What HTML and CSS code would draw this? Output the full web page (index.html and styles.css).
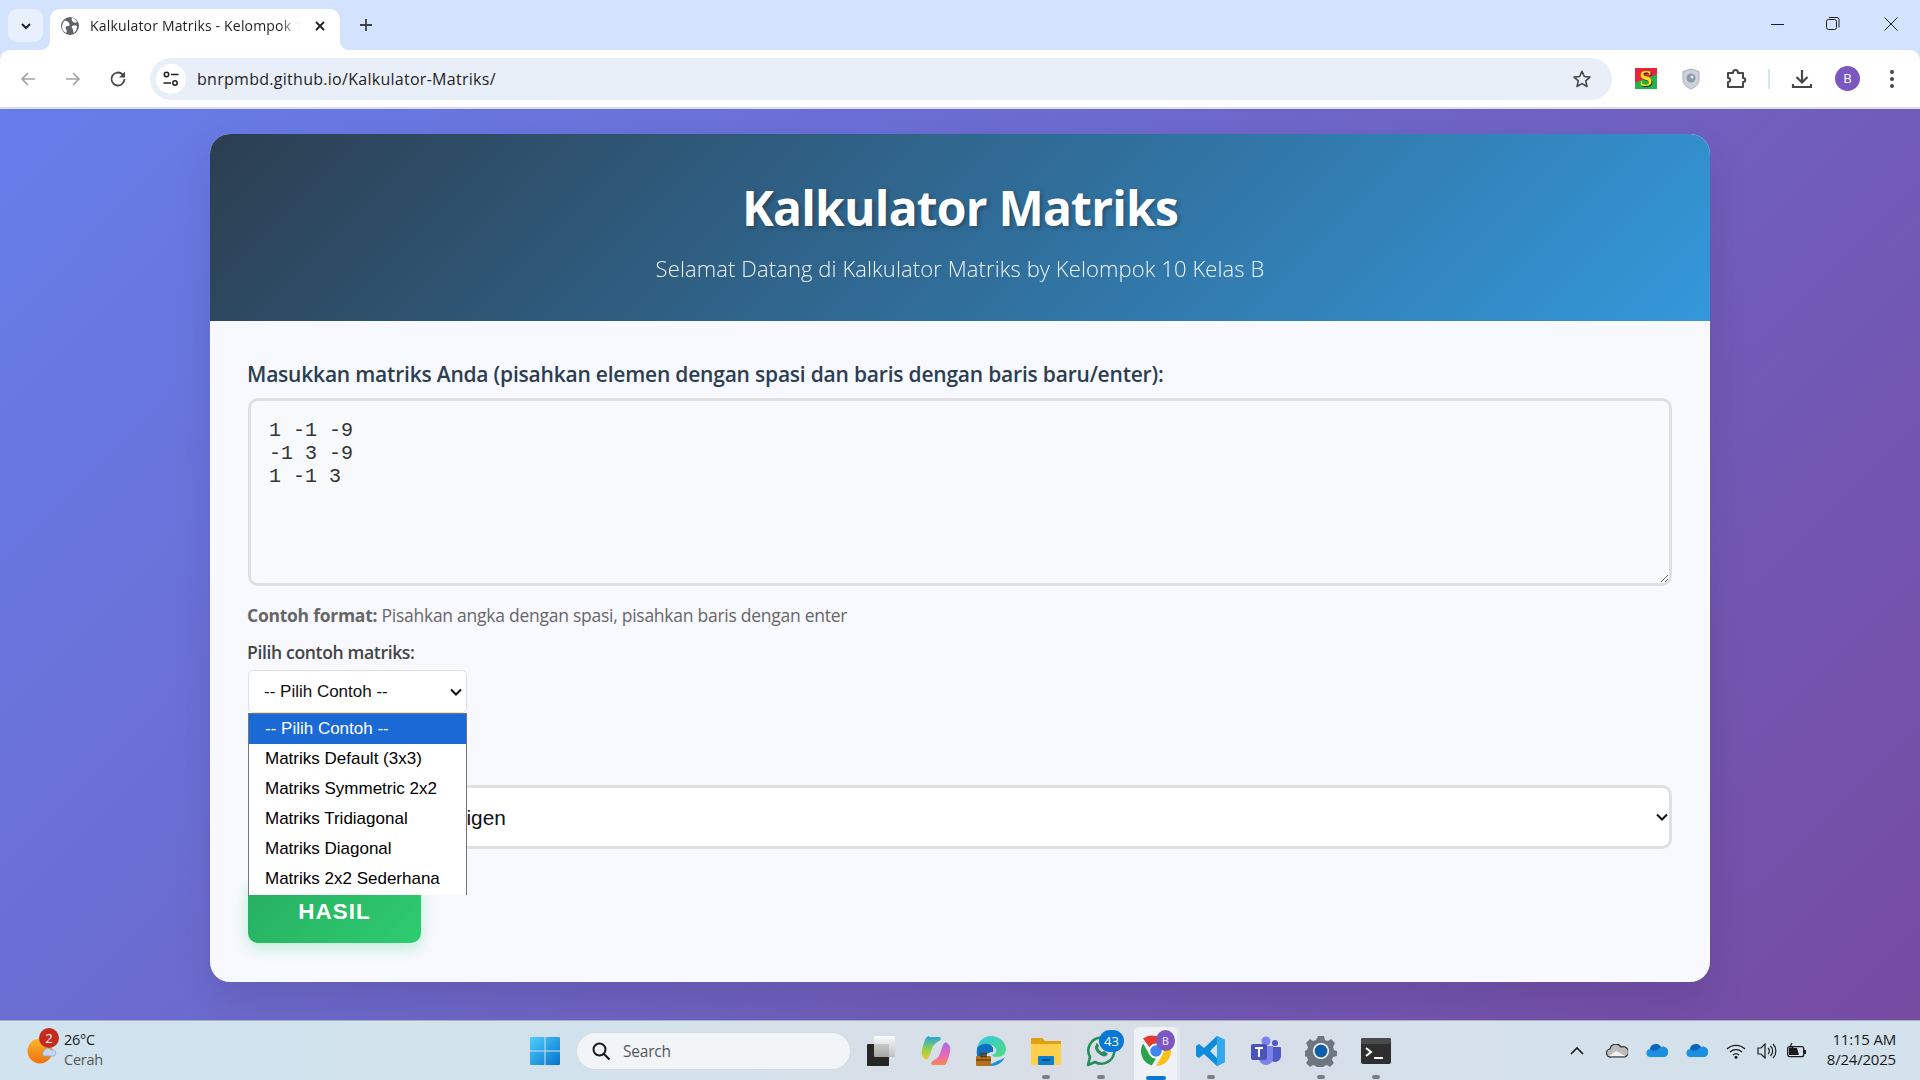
FILE: index.html
```html
<!DOCTYPE html>
<html lang="id">
<head>
<meta charset="utf-8">
<title>Kalkulator Matriks</title>
<link rel="stylesheet" href="styles.css">
</head>
<body>
<header class="browser">
  <div class="tabstrip">
    <button class="tabsearch"><svg width="14" height="14" viewBox="0 0 14 14"><path d="M3 5l4 4 4-4" fill="none" stroke="#1f1f1f" stroke-width="2"/></svg></button>
    <div class="tab">
      <svg class="favicon" width="18" height="18" viewBox="0 0 18 18"><circle cx="9" cy="9" r="9" fill="#5f6368"/><path d="M3 4c3-1 4 1 5 2s1 3-1 3-3 1-2 3 1 3 0 4c-2-1-4-3-4-6 0-2 1-4 2-6zM11 1c2 0 4 2 5 4-1 1-3 1-4 0s-2-3-1-4zM11 9c2-1 4-1 5 0 0 3-1 5-3 7-1-1-1-2-1-3s-2-3-1-4z" fill="#fff"/></svg>
      <span class="tabtitle">Kalkulator Matriks - Kelompok 10 Kelas B</span>
      <svg class="tabclose" width="12" height="12" viewBox="0 0 12 12"><path d="M2 2l8 8M10 2l-8 8" stroke="#1f1f1f" stroke-width="1.8"/></svg>
    </div>
    <svg class="newtab" width="14" height="14" viewBox="0 0 14 14"><path d="M7 1v12M1 7h12" stroke="#3c4043" stroke-width="1.8"/></svg>
    <div class="winctrls">
      <svg width="14" height="14" viewBox="0 0 14 14"><path d="M0 7.5h13" stroke="#1f1f1f"/></svg>
      <svg width="14" height="14" viewBox="0 0 14 14"><rect x=".5" y="2.5" width="10" height="10" rx="2" fill="none" stroke="#1f1f1f"/><path d="M3 .5h8a2 2 0 0 1 2 2v8" fill="none" stroke="#1f1f1f"/></svg>
      <svg class="winclose" width="14" height="14" viewBox="0 0 14 14"><path d="M.5.5l13 13M13.500.5l-13 13" stroke="#1f1f1f"/></svg>
    </div>
  </div>
  <div class="toolbar">
    <svg class="navbtn" width="18" height="18" viewBox="0 0 18 18"><path d="M16 9H3M9 3L3 9l6 6" fill="none" stroke="#a0a3a7" stroke-width="1.7"/></svg>
    <svg class="navbtn" width="18" height="18" viewBox="0 0 18 18"><path d="M2 9h13M9 3l6 6-6 6" fill="none" stroke="#a0a3a7" stroke-width="1.7"/></svg>
    <svg class="navbtn" width="18" height="18" viewBox="0 0 18 18"><path d="M15.500 9a6.500 6.500 0 1 1-1.900-4.600L15.500 6.500" fill="none" stroke="#474747" stroke-width="1.800"/><path d="M16 1.500v6h-6z" fill="#474747"/></svg>
    <div class="omnibox">
      <span class="tune"><svg width="18" height="18" viewBox="0 0 18 18"><circle cx="4.500" cy="4.500" r="2.200" fill="none" stroke="#1f1f1f" stroke-width="1.500"/><path d="M9 4.500h7.500M1.500 13H9" stroke="#1f1f1f" stroke-width="1.500"/><circle cx="13" cy="13" r="2.200" fill="none" stroke="#1f1f1f" stroke-width="1.500"/></svg></span>
      <span class="url">bnrpmbd.github.io/Kalkulator-Matriks/</span>
      <svg class="star" width="20" height="20" viewBox="0 0 20 20"><path d="M10 2.300l2.300 5.200 5.700.6-4.300 3.800 1.300 5.600L10 14.600l-5 2.900 1.300-5.600L2 8.100l5.700-.6z" fill="none" stroke="#474747" stroke-width="1.600" stroke-linejoin="round"/></svg>
    </div>
    <div class="extensions">
      <span class="ext-s">S</span>
      <svg class="ext-shield" width="18" height="22" viewBox="0 0 18 22"><path d="M9 1l8 2.500v8c0 4.500-4 8-8 9.500-4-1.500-8-5-8-9.500v-8z" fill="#cbd2dc" stroke="#a3adbb"/><circle cx="9" cy="10" r="4.500" fill="#8f99a8"/><circle cx="10" cy="9" r="1.500" fill="#e4e8ee"/></svg>
      <svg class="ext-puzzle" width="22" height="22" viewBox="0 0 22 22"><path d="M2 5h5c0-4 5-4 5 0h5v5c3 0 3 4 0 4v5H2v-5c3 0 3-4 0-4z" fill="none" stroke="#474747" stroke-width="2" stroke-linejoin="round"/></svg>
      <span class="divider"></span>
      <svg class="ext-dl" width="22" height="22" viewBox="0 0 22 22"><path d="M11 2v12M5.500 9l5.500 5.500L16.500 9M2 16v3h18v-3" fill="none" stroke="#474747" stroke-width="2.200"/></svg>
      <span class="avatar">B</span>
      <svg class="ext-menu" width="6" height="20" viewBox="0 0 6 20"><circle cx="3" cy="3" r="2" fill="#474747"/><circle cx="3" cy="10" r="2" fill="#474747"/><circle cx="3" cy="17" r="2" fill="#474747"/></svg>
    </div>
  </div>
</header>

<main class="viewport">
  <section class="card">
    <div class="hero">
      <h1 class="hero-title">Kalkulator Matriks</h1>
      <p class="hero-sub">Selamat Datang di Kalkulator Matriks by Kelompok 10 Kelas B</p>
    </div>
    <div class="content">
      <label class="main-label">Masukkan matriks Anda (pisahkan elemen dengan spasi dan baris dengan baris baru/enter):</label>
      <textarea class="matrix-input" spellcheck="false">1 -1 -9
-1 3 -9
1 -1 3</textarea>
      <p class="hint"><strong>Contoh format:</strong> Pisahkan angka dengan spasi, pisahkan baris dengan enter</p>
      <label class="sub-label">Pilih contoh matriks:</label>
      <div class="example-wrap">
        <select class="example-select"><option>-- Pilih Contoh --</option></select>
        <ul class="popup">
          <li class="popup-item selected">-- Pilih Contoh --</li>
          <li class="popup-item">Matriks Default (3x3)</li>
          <li class="popup-item">Matriks Symmetric 2x2</li>
          <li class="popup-item">Matriks Tridiagonal</li>
          <li class="popup-item">Matriks Diagonal</li>
          <li class="popup-item">Matriks 2x2 Sederhana</li>
        </ul>
      </div>
      <label class="op-label">Pilih operasi:</label>
      <select class="op-select"><option>Nilai Eigen &amp; Vektor Eigen</option></select>
      <button class="submit">HASIL</button>
    </div>
  </section>
</main>

<footer class="taskbar">
  <div class="weather">
    <span class="weather-icon">
      <svg width="32" height="32" viewBox="0 0 32 32"><defs><linearGradient id="sun" x1="0" y1="0" x2="0" y2="1"><stop offset="0" stop-color="#f9b72c"/><stop offset="1" stop-color="#f0700f"/></linearGradient></defs><circle cx="15" cy="16" r="12.500" fill="url(#sun)"/><path d="M19 21a3 3 0 0 1 0-5 4 4 0 0 1 7-1 3 3 0 0 1 3 6z" fill="#c5d7f0" stroke="#8ea9d8" stroke-width=".8"/></svg>
      <span class="weather-badge">2</span>
    </span>
    <span class="weather-text"><span class="temp">26°C</span><span class="cond">Cerah</span></span>
  </div>
  <svg class="winlogo" width="30" height="30" viewBox="0 0 30 30"><defs><linearGradient id="win" x1="0" y1="0" x2="1" y2="1"><stop offset="0" stop-color="#52cdfa"/><stop offset="1" stop-color="#0373cf"/></linearGradient></defs><path d="M1 1h13.500v13.500H0V2a1 1 0 0 1 1-1zM15.500 1H29a1 1 0 0 1 1 1v12.500H15.500zM0 15.500h14.500V29H1a1 1 0 0 1-1-1zM15.500 15.500H30V28a1 1 0 0 1-1 1H15.500z" fill="url(#win)"/></svg>
  <div class="searchbox">
    <svg width="20" height="20" viewBox="0 0 20 20"><circle cx="8.500" cy="8.500" r="6" fill="none" stroke="#1a1a1a" stroke-width="2"/><path d="M13 13l5.500 5.500" stroke="#1a1a1a" stroke-width="2.200"/></svg>
    <span>Search</span>
  </div>
  <div class="apps">
    <span class="app">
      <svg width="30" height="32" viewBox="0 0 30 32"><defs><linearGradient id="tv" x1="0" y1="0" x2="0" y2="1"><stop offset="0" stop-color="#fff"/><stop offset="1" stop-color="#bbb"/></linearGradient></defs><rect x="1" y="9" width="22" height="22" rx="1" fill="#262626"/><rect x="8" y="1" width="21" height="21" rx="1" fill="url(#tv)" opacity=".85"/></svg>
    </span>
    <span class="app">
      <svg width="30" height="30" viewBox="0 0 30 30"><defs><linearGradient id="cp1" x1="0" y1="0" x2="0" y2="1"><stop offset="0" stop-color="#1fa2e6"/><stop offset=".55" stop-color="#8fd14f"/><stop offset="1" stop-color="#f5c52d"/></linearGradient><linearGradient id="cp2" x1="0" y1="0" x2="0" y2="1"><stop offset="0" stop-color="#a86be8"/><stop offset=".6" stop-color="#ec6bb6"/><stop offset="1" stop-color="#f58a4a"/></linearGradient></defs><path d="M8 1h10c2 0 2 1 1.500 3L15 7l-3 3-4 11c-1 2-2 3-4 2-3-2-4-5-3-9 1-5 3-10 4-12 1-1 2-2 3-2z" fill="url(#cp1)"/><path d="M22 29H12c-2 0-2-1-1.500-3L15 23l3-3 4-11c1-2 2-3 4-2 3 2 4 5 3 9-1 5-3 10-4 12-1 1-2 1-3 1z" fill="url(#cp2)"/></svg>
    </span>
    <span class="app">
      <svg width="32" height="32" viewBox="0 0 32 32"><defs><linearGradient id="ed" x1="0" y1="0" x2="1" y2="1"><stop offset="0" stop-color="#34c6e8"/><stop offset="1" stop-color="#4fdc7c"/></linearGradient></defs><path d="M2 14C3 6 9 1 16 1c9 0 15 7 15 13 0 5-4 8-9 8-3 0-5-1-5-2 3-1 5-3 4-6-2-4-6-5-10-4-4 1-8 3-9 4z" fill="url(#ed)"/><path d="M2 14c0-2 5-6 11-5 5 1 6 5 5 8-4 0-10 2-11 12C3 26 1 20 2 14z" fill="#0f6fc0"/><path d="M30 22c-3 6-8 9-14 9-2 0-4 0-6-2 3 1 8 0 12-3 3-1 6-2 8-4z" fill="#1b8fd8"/><rect x="1" y="21" width="15" height="10" rx="1" fill="#b5701f"/><rect x="6" y="18.500" width="5" height="3" fill="none" stroke="#5b3a10" stroke-width="1.500"/><path d="M1 25h15" stroke="#6d4210" stroke-width="1.500"/></svg>
    </span>
    <span class="app dot">
      <svg width="30" height="30" viewBox="0 0 30 30"><path d="M0 2h11l3 3h16v6H0z" fill="#e0a012"/><path d="M0 8h30v20a1 1 0 0 1-1 1H1a1 1 0 0 1-1-1z" fill="#fdcf4c"/><rect x="7" y="20" width="16" height="9" rx="1" fill="#0d7fd0"/><path d="M11 24h8" stroke="#06406e" stroke-width="1.500"/></svg>
    </span>
    <span class="app dot">
      <svg width="32" height="32" viewBox="0 0 32 32"><path d="M3 30l2-8a13 13 0 1 1 5 5z" fill="none" stroke="#2a8c5e" stroke-width="2.600" stroke-linejoin="round"/><path d="M11 10c-2 2-1 5 2 8s6 4 8 3c2-1 2-3 1-3l-3-2-2 1c-1 0-3-2-4-4l1-2-2-3c-1 0-1 1-1 2z" fill="#2a8c5e"/></svg>
      <span class="app-badge">43</span>
    </span>
    <span class="app active">
      <svg width="32" height="32" viewBox="0 0 32 32"><path d="M16 1a15 15 0 0 1 13 7.500H16a7.500 7.500 0 0 0-6.500 3.800L3 3.500A15 15 0 0 1 16 1z" fill="#e33b2e"/><path d="M3.100 8.500L9.500 19.800a7.500 7.500 0 0 0 6.500 3.700l-4.300 7A15 15 0 0 1 3.100 8.500z" fill="#2ba14b"/><path d="M29 8.500A15 15 0 0 1 16 31l6.500-11.300a7.500 7.500 0 0 0 0-7.500L16 8.500z" fill="#fbc116"/><circle cx="16" cy="16" r="6.500" fill="#3f86ee" stroke="#fff" stroke-width="1.500"/></svg>
      <span class="chrome-badge">B</span>
    </span>
    <span class="app dot">
      <svg width="30" height="32" viewBox="0 0 30 32"><path d="M21 1l8 4v22l-8 4-13-12-5 4-3-2V11l3-2 5 4zM21 9l-7 7 7 7z" fill="#0f8bdc" fill-rule="evenodd"/><path d="M21 1l8 4v22l-8 4z" fill="#30a9ef"/></svg>
    </span>
    <span class="app">
      <svg width="32" height="30" viewBox="0 0 32 30"><circle cx="16" cy="5" r="4.500" fill="#7b83eb"/><circle cx="25" cy="7" r="3" fill="#5059c9"/><path d="M21 11h9a1 1 0 0 1 1 1v8c0 3-3 6-6 6-2 0-3-1-4-2z" fill="#5059c9"/><path d="M9 10h14v12a7 7 0 0 1-14 0z" fill="#7b83eb"/><rect x="1" y="8" width="16" height="16" rx="2" fill="#4b53bc"/><path d="M5 12h8M9 12v9" stroke="#fff" stroke-width="2"/></svg>
    </span>
    <span class="app dot">
      <svg width="32" height="32" viewBox="0 0 32 32"><path d="M13 1h6l1 4 3 1 3-2 4 4-2 4 1 3 3 1v5l-4 1-1 3 2 3-4 4-3-2-3 1-1 4h-6l-1-4-3-1-3 2-4-4 2-3-1-3-3-1v-5l3-1 1-3-2-4 4-4 3 2 3-1z" fill="#6e7781"/><circle cx="16" cy="16" r="8" fill="#fff"/><circle cx="16" cy="16" r="6.500" fill="#0d5fa8"/></svg>
    </span>
    <span class="app dot">
      <svg width="30" height="26" viewBox="0 0 30 26"><rect width="30" height="26" rx="2" fill="#2f2f2f"/><rect width="30" height="6" rx="2" fill="#4a4a4a"/><path d="M5 10l5 4-5 4" fill="none" stroke="#fff" stroke-width="2"/><path d="M13 20h9" stroke="#fff" stroke-width="2"/></svg>
    </span>
  </div>
  <div class="tray">
    <svg class="tray-chevron" width="16" height="10" viewBox="0 0 16 10"><path d="M2 8l6-6 6 6" fill="none" stroke="#1a1a1a" stroke-width="1.600"/></svg>
    <svg class="tray-cloud" width="22" height="14" viewBox="0 0 22 14"><path d="M5 13a4 4 0 0 1-1-8 6 6 0 0 1 11-2 5 5 0 0 1 4 10z" fill="#bdbdbd" stroke="#2a2a2a" stroke-width="1.200"/><path d="M3 12l7-5 9 5z" fill="#f2f2f2"/></svg>
    <svg class="tray-cloud" width="22" height="14" viewBox="0 0 22 14"><path d="M5 13a4 4 0 0 1-1-8 6 6 0 0 1 11-2 5 5 0 0 1 4 10z" fill="#1b8fe0"/><path d="M4 5a6 6 0 0 1 11-2l-4 3-4 1z" fill="#0b62bc"/></svg>
    <svg class="tray-cloud" width="22" height="14" viewBox="0 0 22 14"><path d="M5 13a4 4 0 0 1-1-8 6 6 0 0 1 11-2 5 5 0 0 1 4 10z" fill="#1b8fe0"/><path d="M4 5a6 6 0 0 1 11-2l-4 3-4 1z" fill="#0b62bc"/></svg>
    <svg class="tray-wifi" width="20" height="16" viewBox="0 0 20 16"><path d="M1 6a13 13 0 0 1 18 0M4 9a9 9 0 0 1 12 0M7 12a4.500 4.500 0 0 1 6 0" fill="none" stroke="#1a1a1a" stroke-width="1.300"/><circle cx="10" cy="14.300" r="1.500" fill="#1a1a1a"/></svg>
    <svg class="tray-vol" width="20" height="16" viewBox="0 0 20 16"><path d="M1 5h3l4-4v14l-4-4H1z" fill="none" stroke="#1a1a1a" stroke-width="1.200"/><path d="M11 5a4 4 0 0 1 0 6M13.500 3a7 7 0 0 1 0 10M16 1a10 10 0 0 1 0 14" fill="none" stroke="#1a1a1a" stroke-width="1.200"/></svg>
    <svg class="tray-batt" width="20" height="16" viewBox="0 0 20 16"><rect x=".7" y="3.700" width="16" height="10" rx="2" fill="none" stroke="#1a1a1a" stroke-width="1.300"/><path d="M18 7v4" stroke="#1a1a1a" stroke-width="2"/><path d="M2 5h8l2 7H2z" fill="#1a1a1a"/><path d="M5 0L3 4h3L4 8" fill="none" stroke="#1a1a1a" stroke-width="1.200"/></svg>
    <div class="clock"><span>11:15 AM</span><span>8/24/2025</span></div>
  </div>
</footer>
</body>
</html>
```
FILE: styles.css
```css
* { box-sizing: border-box; }
html, body { margin: 0; height: 1080px; overflow: hidden; }
body { display: flex; flex-direction: column; width: 1920px; font-family: "Open Sans", "Noto Sans", sans-serif; }

/* browser chrome */
.browser { background: #d3e3fd; flex: none; }
.tabstrip { height: 50px; display: flex; align-items: flex-end; padding-left: 8px; position: relative; }
.tabsearch { width: 35px; height: 33px; margin-bottom: 8px; border: 0; border-radius: 9px; background: #e8f0fe; display: flex; align-items: center; justify-content: center; padding: 0; }
.tab { width: 290px; height: 41px; margin-left: 7px; background: #fff; border-radius: 10px 10px 0 0; display: flex; align-items: center; padding: 0 14px 8px 11px; position: relative; }
.tab::before, .tab::after { content: ""; position: absolute; bottom: 0; width: 10px; height: 10px; }
.tab::before { left: -10px; background: radial-gradient(circle at 0 0, #d3e3fd 10px, #fff 10.5px); }
.tab::after { right: -10px; background: radial-gradient(circle at 100% 0, #d3e3fd 10px, #fff 10.5px); }
.favicon { flex: none; }
.tabtitle { margin-left: 11px; width: 210px; overflow: hidden; white-space: nowrap; font-size: 14px; letter-spacing: .18px; color: #1f1f1f; -webkit-mask-image: linear-gradient(90deg, #000 90%, transparent); mask-image: linear-gradient(90deg, #000 90%, transparent); }
.tabclose { margin-left: auto; flex: none; }
.newtab { margin: 0 0 18px 19px; flex: none; }
.winctrls { margin-left: auto; display: flex; gap: 41px; padding-right: 22px; align-self: flex-start; padding-top: 17px; }
.winclose { margin-left: 3px; }
.toolbar { height: 59px; background: #fff; border-radius: 10px 10px 0 0; border-bottom: 2px solid #dedede; display: flex; align-items: center; padding: 0 18px 0 19px; }
.navbtn { flex: none; margin-right: 27px; }
.navbtn:nth-child(3) { margin-right: 23px; }
.omnibox { width: 1462px; height: 42px; border-radius: 21px; background: #e9eff8; display: flex; align-items: center; padding: 0 20px 0 6px; flex: none; }
.tune { width: 30px; height: 30px; border-radius: 50%; background: #fff; display: flex; align-items: center; justify-content: center; }
.url { margin-left: 11px; font-size: 16px; letter-spacing: .28px; color: #1f1f1f; }
.star { margin-left: auto; }
.extensions { display: flex; align-items: center; flex: none; }
.ext-s { width: 22px; height: 21px; margin-left: 23px; background: linear-gradient(160deg, #e8233f 0 48%, #1fb34a 52%); color: #ffe21a; font: bold 23px/21px "Liberation Serif", serif; text-align: center; text-shadow: 1px 1px 0 #222; }
.ext-shield { margin-left: 25px; }
.ext-puzzle { margin-left: 26px; }
.divider { width: 2px; height: 20px; margin-left: 20px; background: #d3e3fd; }
.ext-dl { margin-left: 21px; }
.avatar { width: 25px; height: 25px; margin-left: 22px; border-radius: 50%; background: #7b57c0; color: #fff; font-size: 13px; line-height: 25px; text-align: center; }
.ext-menu { margin-left: 29px; }

/* page */
.viewport { flex: 1; min-height: 0; padding: 25px 210px 0; background: linear-gradient(135deg, #667eea 0%, #764ba2 100%); }
.card { height: 848px; border-radius: 20px; background: #f8f9ff; box-shadow: 0 20px 40px rgba(0,0,0,.1); overflow: hidden; }
.hero { height: 187px; padding-top: 40px; text-align: center; color: #fff; background: linear-gradient(135deg, #2c3e50 0%, #3498db 100%); }
.hero-title { margin: 0; font-size: 48px; line-height: 68px; font-weight: 700; letter-spacing: -.8px; text-shadow: 2px 2px 4px rgba(0,0,0,.3); }
.hero-sub { margin: 11px 0 0; font-size: 22px; line-height: 30px; font-weight: 300; letter-spacing: .1px; opacity: .92; }
.content { padding: 38px 38px 0; display: flex; flex-direction: column; align-items: flex-start; }
.main-label { font-size: 21px; line-height: 30px; font-weight: 600; color: #2c3e50; letter-spacing: -.21px; margin: 0 0 0 -1px; }
.matrix-input { display: block; width: 1424px; height: 188px; margin-top: 9px; padding: 18px 18px; border: 3px solid #e0e0e0; border-radius: 10px; background: #f8f9fa; font: 20px/23px "Liberation Mono", monospace; color: #333; outline: 0; }
.hint { margin: 17px 0 0 -1px; font-size: 17.500px; line-height: 24px; color: #666; letter-spacing: -.26px; }
.sub-label { margin: 13px 0 0 -1px; font-size: 17.600px; line-height: 24px; font-weight: 600; color: #444; letter-spacing: -.37px; }
.example-wrap { position: relative; margin-top: 6px; }
.example-select { display: block; width: 219px; height: 43px; padding: 0 15px; border: 1px solid #e0e0e0; border-radius: 5px; font: 17px "Liberation Sans", sans-serif; color: #111; appearance: none; background: #fff url("data:image/svg+xml,%3Csvg xmlns='http://www.w3.org/2000/svg' width='12' height='8'%3E%3Cpath d='M1 1.500l5 5 5-5' fill='none' stroke='%23111' stroke-width='2'/%3E%3C/svg%3E") no-repeat right 4px center; }
.popup { position: absolute; top: 43px; left: 0; z-index: 2; width: 219px; height: 182px; margin: 0; padding: 0; overflow: hidden; list-style: none; background: #fff; border: 1px solid #767676; border-bottom: 0; font: 17px/30px "Liberation Sans", sans-serif; color: #000; }
.popup-item { height: 30px; padding-left: 16px; white-space: nowrap; }
.popup-item.selected { background: #1a69d4; color: #fff; }
.op-label { margin-top: 43px; height: 29px; font-size: 18px; font-weight: 600; color: #444; }
.op-select { display: block; width: 1424px; height: 64px; padding: 0 12px; border: 3px solid #e0e0e0; border-radius: 10px; font: 20.800px "Liberation Sans", sans-serif; color: #111; appearance: none; background: #fff url("data:image/svg+xml,%3Csvg xmlns='http://www.w3.org/2000/svg' width='12' height='8'%3E%3Cpath d='M1 1.500l5 5 5-5' fill='none' stroke='%23111' stroke-width='2'/%3E%3C/svg%3E") no-repeat right 1px center; background-origin: padding-box; }
.submit { width: 173px; height: 62px; margin-top: 32px; padding: 0; border: 0; border-radius: 10px; background: linear-gradient(135deg, #27ae60, #2ecc71); color: #fff; font: bold 22.400px "Liberation Sans", sans-serif; letter-spacing: 1.100px; box-shadow: 0 5px 15px rgba(46,204,113,.3); }

/* taskbar */
.taskbar { height: 60px; flex: none; display: flex; align-items: center; border-top: 1px solid #a9b0c4; background: linear-gradient(90deg, #d0e3ef 0%, #d2e2ec 30%, #d9dee6 55%, #d5e0ea 75%, #d3e2ec 100%); position: relative; }
.weather { width: 530px; flex: none; display: flex; align-items: center; padding-left: 25px; }
.weather-icon { position: relative; width: 32px; height: 32px; }
.weather-badge { position: absolute; left: 14px; top: -7px; width: 20px; height: 20px; border-radius: 50%; background: #c42b1c; color: #fff; font-size: 13px; line-height: 20px; text-align: center; }
.weather-text { display: flex; flex-direction: column; margin-left: 7px; font-size: 14.500px; line-height: 20px; letter-spacing: -.25px; margin-top: -1px; }
.temp { color: #1a1a1a; }
.cond { color: #555; }
.winlogo { flex: none; }
.searchbox { width: 275px; height: 38px; margin-left: 16px; flex: none; border-radius: 19px; background: #f1f5f8; border: 1px solid #d5dbe1; display: flex; align-items: center; padding-left: 14px; gap: 12px; font-size: 15.500px; color: #555; letter-spacing: -.2px; }
.apps { display: flex; margin-left: 2px; height: 100%; }
.app { width: 55px; height: 100%; display: flex; align-items: center; justify-content: center; position: relative; }
.dot::after { content: ""; position: absolute; left: 24px; bottom: 1px; width: 8px; height: 4px; border-radius: 2px; background: #7b7f85; }
.app-badge { position: absolute; left: 26px; top: 9px; min-width: 25px; height: 22px; border-radius: 11px; background: #0878d4; color: #fff; font-size: 13px; line-height: 22px; text-align: center; }
.active::before { content: ""; position: absolute; left: 6px; top: 6px; width: 43px; height: 53px; border-radius: 5px 5px 0 0; background: #eef2f7; box-shadow: 3px 0 0 #e2e8ef; }
.active svg { position: relative; }
.active::after { content: ""; position: absolute; left: 18px; bottom: 0; width: 20px; height: 4px; border-radius: 2px; background: #0878d4; }
.chrome-badge { position: absolute; left: 28px; top: 9px; width: 19px; height: 21px; border-radius: 50%; background: #7b57c0; color: #dccdf2; font-size: 11px; line-height: 21px; text-align: center; font-weight: 600; }
.tray { margin-left: auto; display: flex; align-items: center; padding-right: 24px; }
.tray-chevron { margin-right: 21px; }
.tray-cloud { margin-right: 18px; }
.tray-wifi { margin-right: 11px; }
.tray-vol { margin-right: 10px; }
.tray-batt { margin-right: 20px; }
.clock { display: flex; flex-direction: column; align-items: flex-end; font-size: 15px; line-height: 20px; color: #1a1a1a; letter-spacing: -.2px; margin-top: -4px; }
```
